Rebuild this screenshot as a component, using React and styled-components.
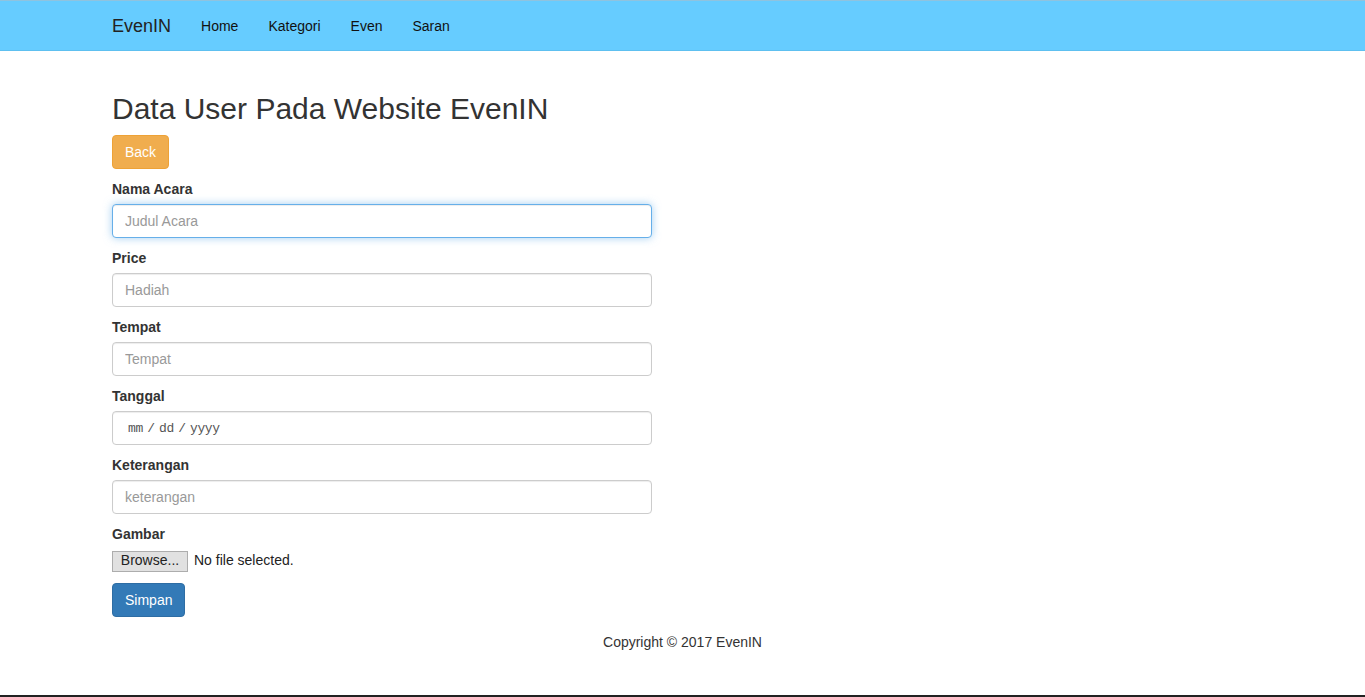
import React from "react";
import styled, { createGlobalStyle } from "styled-components";

const Global = createGlobalStyle`
  html, body { margin: 0; padding: 0; background: #fff; }
  body {
    font-family: "Liberation Sans", Arial, Helvetica, sans-serif;
    font-size: 14px;
    line-height: 1.42857;
    color: #333;
  }
  * { box-sizing: border-box; }
`;

const Page = styled.div`
  min-height: 100vh;
  display: flex;
  flex-direction: column;
`;

const Navbar = styled.nav`
  height: 51px;
  background: #66ccff;
  border-top: 1px solid #8fc3df;
  border-bottom: 1px solid #5ec0f0;
  flex-shrink: 0;
`;

const Container = styled.div`
  width: 1171px;
  margin: 0 auto;
  padding: 0 15px;
`;

const NavInner = styled(Container)`
  display: flex;
  align-items: center;
  height: 49px;
`;

const Brand = styled.a`
  font-size: 18px;
  color: #222;
  text-decoration: none;
  padding-right: 15px;
  line-height: 20px;
`;

const NavLink = styled.a`
  font-size: 14px;
  color: #111;
  text-decoration: none;
  padding: 0 15px;
  line-height: 20px;
`;

const Main = styled(Container)`
  flex: 1;
  padding-top: 21px;
`;

const Title = styled.h2`
  font-size: 30px;
  font-weight: 500;
  line-height: 1.1;
  margin: 20px 0 10px;
  color: #333;
`;

const Btn = styled.button`
  display: inline-block;
  font-family: inherit;
  font-size: 14px;
  line-height: 20px;
  padding: 6px 12px;
  border-radius: 4px;
  color: #fff;
  border: 1px solid ${(p) => (p.$variant === "primary" ? "#2e6da4" : "#eea236")};
  background: ${(p) => (p.$variant === "primary" ? "#337ab7" : "#f0ad4e")};
  cursor: pointer;
`;

const Form = styled.form`
  width: 540px;
  margin-top: 10px;
`;

const Group = styled.div`
  margin-bottom: 10px;
`;

const Label = styled.label`
  display: block;
  font-weight: 700;
  margin-bottom: 5px;
  line-height: 20px;
`;

const Input = styled.input`
  display: block;
  width: 100%;
  height: 34px;
  padding: 6px ${(p) => (p.$mono ? "15px" : "12px")};
  font-size: ${(p) => (p.$mono ? "13px" : "14px")};
  font-family: ${(p) =>
    p.$mono ? `"Liberation Mono", "Courier New", monospace` : "inherit"};
  letter-spacing: ${(p) => (p.$mono ? "-0.4px" : "normal")};
  word-spacing: ${(p) => (p.$mono ? "-3px" : "normal")};
  color: #555;
  background: #fff;
  border: 1px solid ${(p) => (p.$focus ? "#66afe9" : "#ccc")};
  border-radius: 4px;
  box-shadow: ${(p) =>
    p.$focus
      ? "inset 0 1px 1px rgba(0,0,0,.075), 0 0 8px rgba(102,175,233,.6)"
      : "inset 0 1px 1px rgba(0,0,0,.075)"};
  outline: none;
  &::placeholder { color: ${(p) => (p.$mono ? "#555" : "#999")}; }
`;

const FileRow = styled.div`
  display: flex;
  align-items: center;
  gap: 6px;
  height: 24px;
  margin-top: 3px;
`;

const Browse = styled.span`
  display: inline-flex;
  align-items: center;
  justify-content: center;
  width: 76px;
  height: 21px;
  background: #e1e1e1;
  border: 1px solid #adadad;
  font-size: 14px;
  color: #222;
`;

const FileText = styled.span`
  font-size: 14px;
  color: #222;
`;

const Footer = styled.footer`
  text-align: center;
  margin-top: 15px;
  line-height: 20px;
`;

const BottomBar = styled.div`
  height: 2px;
  background: #222;
  flex-shrink: 0;
`;

export default function App() {
  return (
    <Page>
      <Global />
      <Navbar>
        <NavInner>
          <Brand href="#">EvenIN</Brand>
          <NavLink href="#">Home</NavLink>
          <NavLink href="#">Kategori</NavLink>
          <NavLink href="#">Even</NavLink>
          <NavLink href="#">Saran</NavLink>
        </NavInner>
      </Navbar>
      <Main>
        <Title>Data User Pada Website EvenIN</Title>
        <Btn type="button">Back</Btn>
        <Form onSubmit={(e) => e.preventDefault()}>
          <Group>
            <Label>Nama Acara</Label>
            <Input $focus placeholder="Judul Acara" />
          </Group>
          <Group>
            <Label>Price</Label>
            <Input placeholder="Hadiah" />
          </Group>
          <Group>
            <Label>Tempat</Label>
            <Input placeholder="Tempat" />
          </Group>
          <Group>
            <Label>Tanggal</Label>
            <Input $mono placeholder="mm / dd / yyyy" />
          </Group>
          <Group>
            <Label>Keterangan</Label>
            <Input placeholder="keterangan" />
          </Group>
          <Group>
            <Label>Gambar</Label>
            <FileRow>
              <Browse>Browse...</Browse>
              <FileText>No file selected.</FileText>
            </FileRow>
          </Group>
          <Btn $variant="primary" type="submit">Simpan</Btn>
        </Form>
        <Footer>Copyright © 2017 EvenIN</Footer>
      </Main>
      <BottomBar />
    </Page>
  );
}
